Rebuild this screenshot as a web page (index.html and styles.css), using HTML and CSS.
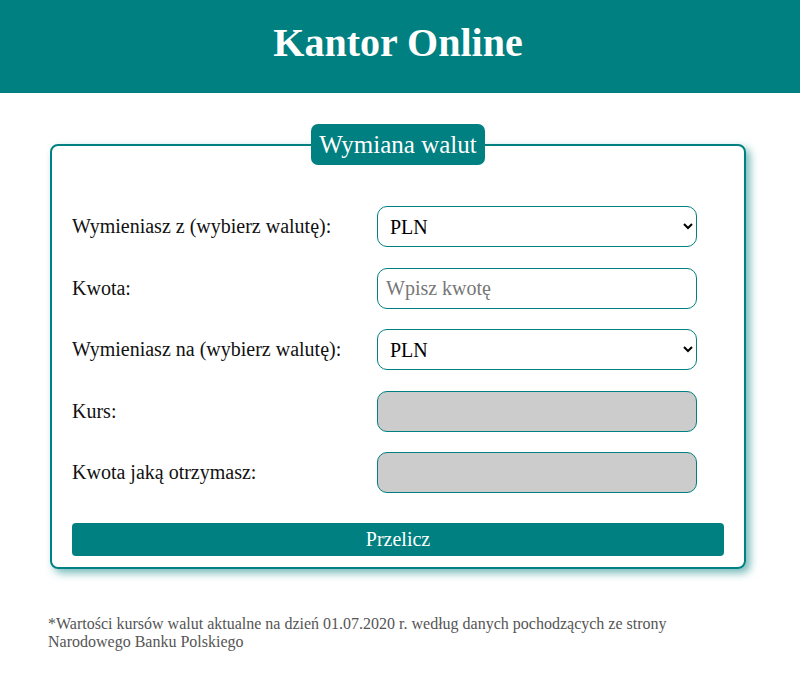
FILE: index.html
```html
<!DOCTYPE html>
<html lang="pl">
<head>
<meta charset="utf-8">
<title>Kantor Online</title>
<link rel="stylesheet" href="styles.css">
</head>
<body>
<header class="top">
  <h1 class="title">Kantor Online</h1>
</header>
<main class="wrap">
  <fieldset class="box">
    <legend class="box-legend">Wymiana walut</legend>
    <div class="rows">
      <label class="lbl" for="from">Wymieniasz z (wybierz walutę):</label>
      <select class="ctl" id="from"><option>PLN</option></select>
      <label class="lbl" for="amount">Kwota:</label>
      <input class="ctl" id="amount" type="text" placeholder="Wpisz kwotę">
      <label class="lbl" for="to">Wymieniasz na (wybierz walutę):</label>
      <select class="ctl" id="to"><option>PLN</option></select>
      <label class="lbl" for="rate">Kurs:</label>
      <input class="ctl ctl-off" id="rate" type="text" disabled>
      <label class="lbl" for="result">Kwota jaką otrzymasz:</label>
      <input class="ctl ctl-off" id="result" type="text" disabled>
    </div>
    <button class="btn" type="button">Przelicz</button>
  </fieldset>
  <p class="note">*Wartości kursów walut aktualne na dzień 01.07.2020 r. według danych pochodzących ze strony Narodowego Banku Polskiego</p>
</main>
</body>
</html>
```
FILE: styles.css
```css
html, body {
  margin: 0;
  padding: 0;
  background: #fff;
  font-family: "Liberation Serif", "Times New Roman", serif;
  color: #111;
}
.top {
  background: #008080;
  padding: 20px 0 27px;
}
.title {
  margin: 0 4px 0 0;
  text-align: center;
  color: #fff;
  font-size: 40px;
  line-height: 46px;
  font-weight: bold;
}
.wrap {
  width: 700px;
  margin: 0 auto;
  padding-top: 31px;
}
.box {
  margin: 0 4px 0 0;
  border: 2px solid #008080;
  border-radius: 8px;
  box-shadow: 4px 4px 8px rgba(0, 128, 128, 0.55);
  padding: 41px 20px 11px;
}
.box-legend {
  margin: 0 auto;
  background: #008080;
  color: #fff;
  font-size: 25px;
  line-height: 41px;
  padding: 0 8px;
  border-radius: 7px;
}
.rows {
  display: grid;
  grid-template-columns: 305px 320px;
  row-gap: 20.5px;
  align-items: center;
}
.lbl {
  font-size: 20px;
}
.ctl {
  box-sizing: border-box;
  width: 320px;
  height: 41px;
  border: 1px solid #008080;
  border-radius: 10px;
  background: #fff;
  font-family: "Liberation Serif", "Times New Roman", serif;
  font-size: 20px;
  color: #000;
  padding: 0 8px;
  outline: none;
}
select.ctl {
  padding: 0 4px 0 8px;
}
.ctl::placeholder {
  color: #777;
}
.ctl-off {
  background: #ccc;
}
.btn {
  display: block;
  width: 100%;
  height: 33px;
  margin-top: 30px;
  border: none;
  border-radius: 4px;
  background: #008080;
  color: #fff;
  font-family: "Liberation Serif", "Times New Roman", serif;
  font-size: 20px;
}
.note {
  margin: 46px 0 0 -2px;
  font-size: 16px;
  line-height: 18px;
  color: #555;
}
```
